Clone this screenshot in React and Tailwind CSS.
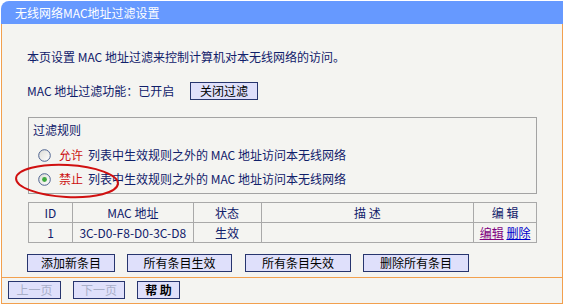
import React from "react";

const font = { fontFamily: '"Noto Sans CJK SC", "Noto Sans", sans-serif' };

const Radio = ({ checked }) => (
  <svg width="13" height="13" viewBox="0 0 13 13" className="shrink-0">
    <defs>
      <linearGradient id={checked ? "rg1" : "rg0"} x1="0" y1="0" x2="1" y2="1">
        <stop offset="0" stopColor="#dcdcd6" />
        <stop offset="1" stopColor="#ffffff" />
      </linearGradient>
    </defs>
    <circle cx="6.5" cy="6.5" r="5.8" fill={`url(#${checked ? "rg1" : "rg0"})`} stroke="#4e6390" strokeWidth="1" />
    {checked && <circle cx="6.5" cy="6.5" r="2.4" fill="#3ca83c" />}
  </svg>
);

const Btn = ({ children, w, disabled, bold }) => (
  <button
    className={`h-[18px] ${w} shrink-0 border border-[#27356e] bg-[#dfe0fb] text-[12px] leading-[16px] ${
      disabled ? "text-[#a9afc9]" : "text-black"
    } ${bold ? "font-bold" : ""}`}
  >
    {children}
  </button>
);

const RuleRow = ({ word, checked }) => (
  <div className="flex h-[14px] items-center">
    <div className="ml-[5px] w-[21px]">
      <Radio checked={checked} />
    </div>
    <span className="text-[#cc1010]">{word}</span>
    <span className="ml-[5px]">列表中生效规则之外的 MAC 地址访问本无线网络</span>
  </div>
);

const cell = "border border-[#a9a9a9] text-center h-[20px] p-0";

export default function App() {
  return (
    <div className="relative h-[307px] w-[566px] overflow-hidden bg-white text-[12px] leading-[16px] text-[#10206a]" style={font}>
      <div className="ml-[1px] mt-[1px] w-[562px]">
        <div className="flex h-[23px] items-center rounded-tl-[8px] bg-[#6699ff] pl-[14px] text-white">
          无线网络MAC地址过滤设置
        </div>
        <div className="border-x border-b border-[#f2a04e] bg-[#f4f4f1]">
          <div className="h-[253px] pl-[25px] pt-[25px]">
            <div className="h-[16px]">本页设置 MAC 地址过滤来控制计算机对本无线网络的访问。</div>
            <div className="mt-[17px] flex h-[18px] items-center">
              <span className="w-[163px]">MAC 地址过滤功能：已开启</span>
              <Btn w="w-[68px]">关闭过滤</Btn>
            </div>
            <div className="ml-[1px] mt-[17px] h-[77px] w-[509px] border border-[#a3a3a3] pl-[4px] pt-[4px]">
              <div className="h-[16px]">过滤规则</div>
              <div className="mt-[10px]">
                <RuleRow word="允许" />
              </div>
              <div className="mt-[10px]">
                <RuleRow word="禁止" checked />
              </div>
            </div>
            <table className="ml-[1px] mt-[8px] w-[509px] border-collapse border border-[#a9a9a9]">
              <tbody>
                <tr>
                  <td className={`${cell} w-[44px]`}>ID</td>
                  <td className={`${cell} w-[121px]`}>MAC 地址</td>
                  <td className={`${cell} w-[68px]`}>状态</td>
                  <td className={`${cell} w-[213px]`}>描 述</td>
                  <td className={`${cell} w-[63px]`}>编 辑</td>
                </tr>
                <tr>
                  <td className={cell}>1</td>
                  <td className={cell}>3C-D0-F8-D0-3C-D8</td>
                  <td className={cell}>生效</td>
                  <td className={cell}></td>
                  <td className={cell}>
                    <a className="text-[#800080] underline">编辑</a>{" "}
                    <a className="text-[#0000cc] underline">删除</a>
                  </td>
                </tr>
              </tbody>
            </table>
            <div className="mt-[11px] flex">
              <Btn w="w-[88px]">添加新条目</Btn>
              <div className="ml-[12px]">
                <Btn w="w-[105px]">所有条目生效</Btn>
              </div>
              <div className="ml-[13px]">
                <Btn w="w-[106px]">所有条目失效</Btn>
              </div>
              <div className="ml-[12px]">
                <Btn w="w-[106px]">删除所有条目</Btn>
              </div>
            </div>
          </div>
          <div className="flex h-[26px] gap-[12px] border-t border-[#f2a04e] pl-[6px] pt-[3px]">
            <Btn w="w-[53px]" disabled>上一页</Btn>
            <Btn w="w-[52px]" disabled>下一页</Btn>
            <Btn w="w-[43px]" bold>帮 助</Btn>
          </div>
        </div>
      </div>
      <svg className="pointer-events-none absolute left-[14px] top-[160px]" width="110" height="42" viewBox="0 0 110 42">
        <ellipse cx="53" cy="21" rx="51" ry="16" transform="rotate(3 53 21)" fill="none" stroke="#d01010" strokeWidth="2" />
      </svg>
    </div>
  );
}
